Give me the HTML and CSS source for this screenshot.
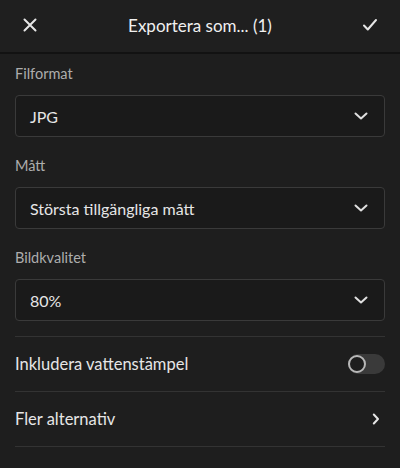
FILE: index.html
```html
<!DOCTYPE html>
<html lang="sv">
<head>
<meta charset="utf-8">
<link rel="stylesheet" href="styles.css">
</head>
<body>
<div class="app">
  <header class="topbar">
    <button class="icon-btn close" aria-label="Stäng">
      <svg width="14" height="14" viewBox="0 0 14 14"><path d="M1.5 1.5 L12.5 12.5 M12.5 1.5 L1.5 12.5" stroke="#e6e6e6" stroke-width="2" stroke-linecap="round" fill="none"/></svg>
    </button>
    <h1 class="title">Exportera som... (1)</h1>
    <button class="icon-btn confirm" aria-label="Klar">
      <svg width="16" height="14" viewBox="0 0 16 14"><path d="M2 7.5 L5.8 11.5 L14 2" stroke="#e6e6e6" stroke-width="2" stroke-linecap="round" stroke-linejoin="round" fill="none"/></svg>
    </button>
  </header>
  <main class="content">
    <section class="field">
      <div class="label">Filformat</div>
      <div class="select"><span class="value">JPG</span><svg class="chev" width="14" height="8" viewBox="0 0 14 8"><path d="M1.5 1.5 L7 6.5 L12.5 1.5" stroke="#e0e0e0" stroke-width="2" stroke-linecap="round" stroke-linejoin="round" fill="none"/></svg></div>
    </section>
    <section class="field">
      <div class="label">Mått</div>
      <div class="select"><span class="value">Största tillgängliga mått</span><svg class="chev" width="14" height="8" viewBox="0 0 14 8"><path d="M1.5 1.5 L7 6.5 L12.5 1.5" stroke="#e0e0e0" stroke-width="2" stroke-linecap="round" stroke-linejoin="round" fill="none"/></svg></div>
    </section>
    <section class="field">
      <div class="label">Bildkvalitet</div>
      <div class="select"><span class="value">80%</span><svg class="chev" width="14" height="8" viewBox="0 0 14 8"><path d="M1.5 1.5 L7 6.5 L12.5 1.5" stroke="#e0e0e0" stroke-width="2" stroke-linecap="round" stroke-linejoin="round" fill="none"/></svg></div>
    </section>
    <div class="rows">
      <div class="row">
        <span>Inkludera vattenstämpel</span>
        <span class="toggle"><span class="knob"></span></span>
      </div>
      <div class="row">
        <span>Fler alternativ</span>
        <svg class="chev-right" width="8" height="12" viewBox="0 0 8 12"><path d="M1.8 1.5 L6 6 L1.8 10.5" stroke="#e6e6e6" stroke-width="2" stroke-linecap="round" stroke-linejoin="round" fill="none"/></svg>
      </div>
    </div>
  </main>
</div>
</body>
</html>
```
FILE: styles.css
```css
* { box-sizing: border-box; }
html, body {
  margin: 0;
  padding: 0;
  background: #1e1e1e;
  color: #e8e8e8;
  font-family: "Lato", "Noto Sans", sans-serif;
}
.app {
  width: 400px;
  height: 468px;
  overflow: hidden;
}
.topbar {
  height: 54px;
  display: flex;
  align-items: center;
  justify-content: space-between;
  padding: 0 14px 2px 14px;
  border-bottom: 2px solid #121212;
  background: #1f1f1f;
}
.icon-btn {
  width: 32px;
  height: 32px;
  border: 0;
  background: none;
  padding: 0;
  display: flex;
  align-items: center;
  justify-content: center;
}
.title {
  margin: 0;
  font-size: 17px;
  font-weight: 400;
  color: #f0f0f0;
}
.content {
  padding: 10px 15px 0 15px;
}
.field + .field { margin-top: 19px; }
.label {
  font-size: 14.5px;
  line-height: 20px;
  color: #adadad;
  margin-bottom: 11px;
}
.select {
  height: 42px;
  border: 1px solid #3a3a3a;
  border-radius: 4px;
  background: #1a1a1a;
  display: flex;
  align-items: center;
  justify-content: space-between;
  padding-left: 14px;
  padding-right: 15px;
  font-size: 16px;
  color: #e6e6e6;
}
.value { display: block; }
.chev { margin-right: 1px; }
.rows {
  margin-top: 15px;
  border-top: 1px solid #333;
}
.row {
  height: 55px;
  border-bottom: 1px solid #333;
  display: flex;
  align-items: center;
  justify-content: space-between;
  font-size: 16.5px;
  color: #e6e6e6;
}
.toggle {
  width: 37px;
  height: 20px;
  border-radius: 10px;
  background: #3a3a3a;
  position: relative;
  display: block;
}
.knob {
  position: absolute;
  left: 0;
  top: 1px;
  width: 18px;
  height: 18px;
  border-radius: 50%;
  border: 2px solid #b8b8b8;
  background: #1e1e1e;
}
.chev-right { margin-right: 5px; }
```
